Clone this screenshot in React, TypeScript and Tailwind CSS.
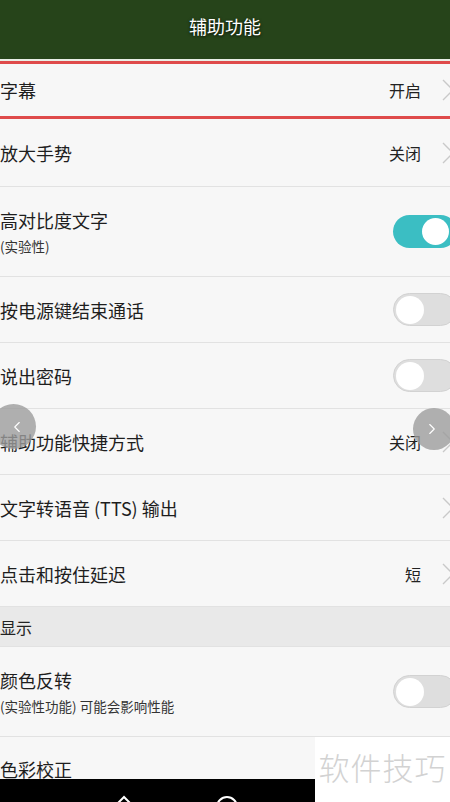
import { ChevronLeft, ChevronRight } from 'lucide-react'

type RowProps = {
  title: string
  sub?: string
  value?: string
  chevron?: boolean
  toggle?: 'on' | 'off'
  h?: string
}

function Chevron() {
  return (
    <svg width="12" height="24" viewBox="0 0 12 24" className="-mr-[4px] ml-[21px] shrink-0">
      <path d="M1 2 L11 12 L1 22" fill="none" stroke="#c9c9c9" strokeWidth="1.4" />
    </svg>
  )
}

function Toggle({ on }: { on: boolean }) {
  return on ? (
    <div className="w-[64px] h-[33px] rounded-full bg-[#3bbec3] flex items-center justify-end pr-[8px] -mr-[7px] shrink-0">
      <div className="w-[27px] h-[27px] rounded-full bg-white" />
    </div>
  ) : (
    <div className="w-[64px] h-[33px] rounded-full bg-[#dedede] border border-[#d2d2d2] flex items-center pl-[2px] -mr-[7px] shrink-0">
      <div className="w-[28px] h-[28px] rounded-full bg-white" />
    </div>
  )
}

function Row({ title, sub, value, chevron, toggle, h = 'h-[66px]' }: RowProps) {
  return (
    <div className={`flex items-center justify-between border-b border-[#e2e2e2] ${h}`}>
      <div className="flex flex-col">
        <span className="text-[18px] leading-[24px] text-[#1e1e1e]">{title}</span>
        {sub && <span className="text-[13.5px] leading-[20px] mt-[4px] text-[#333]">{sub}</span>}
      </div>
      <div className="flex items-center">
        {value && <span className="text-[16px] text-[#222]">{value}</span>}
        {chevron && <Chevron />}
        {toggle && <Toggle on={toggle === 'on'} />}
      </div>
    </div>
  )
}

export default function App() {
  return (
    <div
      className="relative w-[450px] h-[802px] overflow-hidden bg-[#f7f7f7]"
      style={{ fontFamily: '"Noto Sans CJK SC", "Noto Sans", sans-serif' }}
    >
      {/* Header */}
      <div className="h-[59px] bg-[#26441a] flex items-center justify-center pb-[6px]">
        <span className="text-[18px] text-white [text-shadow:0_1px_3px_rgba(0,0,0,0.9)]">辅助功能</span>
      </div>
      <div className="h-[2px] bg-[#e8efe6]" />

      {/* Highlighted row */}
      <div className="border-y-[3px] border-[#df4b4b] h-[58px] flex items-center justify-between">
        <span className="text-[18px] text-[#1e1e1e]">字幕</span>
        <div className="flex items-center">
          <span className="text-[16px] text-[#222]">开启</span>
          <Chevron />
        </div>
      </div>

      <Row title="放大手势" value="关闭" chevron h="h-[68px]" />
      <Row title="高对比度文字" sub="(实验性)" toggle="on" h="h-[90px]" />
      <Row title="按电源键结束通话" toggle="off" />
      <Row title="说出密码" toggle="off" />
      <Row title="辅助功能快捷方式" value="关闭" chevron />
      <Row title="文字转语音 (TTS) 输出" chevron />
      <Row title="点击和按住延迟" value="短" chevron />

      {/* Section header */}
      <div className="h-[40px] bg-[#e9e9e9] flex items-center border-b border-[#e2e2e2]">
        <span className="text-[16px] text-[#222]">显示</span>
      </div>

      <Row title="颜色反转" sub="(实验性功能) 可能会影响性能" toggle="off" h="h-[90px]" />
      <div className="h-[42px] flex items-center pt-[22px]">
        <span className="text-[18px] text-[#1e1e1e]">色彩校正</span>
      </div>

      {/* Nav bar */}
      <div className="absolute left-0 bottom-0 w-[315px] h-[23px] bg-black">
        <svg width="315" height="23" viewBox="0 0 315 23">
          <path d="M124 18 L116 26 L132 26 Z" fill="none" stroke="#fff" strokeWidth="2" />
          <circle cx="227" cy="28" r="10" fill="none" stroke="#fff" strokeWidth="2" />
        </svg>
      </div>

      {/* Watermark */}
      <div className="absolute right-0 bottom-0 w-[135px] h-[65px] bg-white flex items-center justify-center pb-[4px]">
        <span className="text-[31px] font-light text-[#d2d2d2] tracking-[1px]">软件技巧</span>
      </div>

      {/* Pager arrows */}
      <div className="absolute left-[-9px] top-[404px] w-[45px] h-[45px] rounded-full bg-[#9c9c9c]/80 flex items-center justify-center pl-[6px]">
        <ChevronLeft className="w-[18px] h-[18px] text-white" strokeWidth={1.5} />
      </div>
      <div className="absolute left-[413px] top-[408px] w-[42px] h-[42px] rounded-full bg-[#9c9c9c]/80 flex items-center justify-center pr-[4px]">
        <ChevronRight className="w-[18px] h-[18px] text-white" strokeWidth={1.5} />
      </div>
    </div>
  )
}
